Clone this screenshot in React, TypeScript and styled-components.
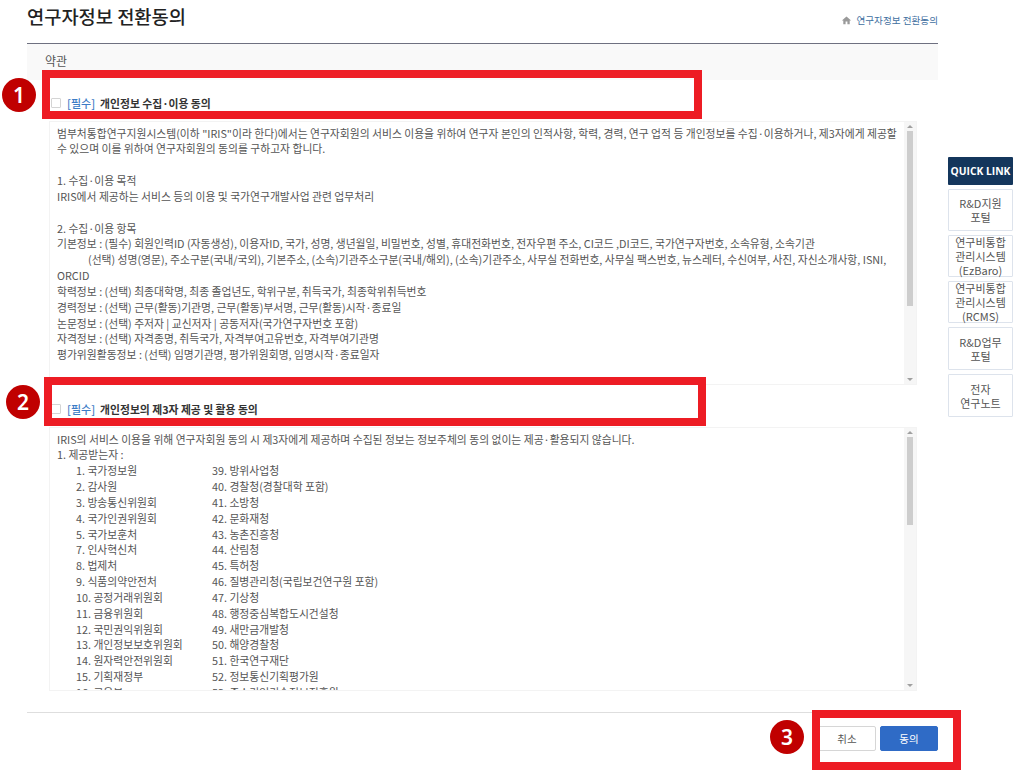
import React from 'react';
import styled, { createGlobalStyle } from 'styled-components';
import { MdHome } from 'react-icons/md';

const GlobalStyle = createGlobalStyle`
  html, body {
    margin: 0;
    padding: 0;
    background: #fff;
    overflow: hidden;
  }
  body {
    font-family: "Noto Sans CJK KR", "Noto Sans", sans-serif;
  }
`;

// Page layout
const Page = styled.div`
  display: flex;
  align-items: flex-start;
  width: 1019px;
  height: 782px;
  padding-left: 27px;
  box-sizing: border-box;
`;

const Main = styled.main`
  width: 911px;
  flex-shrink: 0;
`;

const Header = styled.header`
  display: flex;
  justify-content: space-between;
  align-items: flex-start;
  height: 44px;
  box-sizing: border-box;
  border-bottom: 1px solid #6e7080;
`;

const Title = styled.h1`
  margin: 3px 0 0;
  font-size: 18.7px;
  line-height: 25px;
  font-weight: 500;
  color: #222;
`;

const Breadcrumb = styled.div`
  display: flex;
  align-items: center;
  gap: 4px;
  margin-top: 13px;
  font-size: 9.6px;
  line-height: 14px;
  color: #3f6f9f;

  svg {
    color: #9a9a9a;
    font-size: 11px;
  }
`;

const SectionBar = styled.div`
  height: 36px;
  padding: 7px 0 0 18px;
  box-sizing: border-box;
  background: #f9f9f9;
  font-size: 12px;
  line-height: 20px;
  color: #555;
`;

const AgreeRow = styled.div<{ $height: number }>`
  position: relative;
  display: flex;
  align-items: flex-end;
  gap: 6px;
  height: ${({ $height }) => $height}px;
  padding: 0 0 11px 24px;
  box-sizing: border-box;
  font-size: 10.8px;
  line-height: 14px;
`;

const CheckBox = styled.span`
  width: 8px;
  height: 8px;
  border: 1px solid #d4d4d4;
  border-radius: 1px;
  background: #fff;
  flex-shrink: 0;
  margin-bottom: 2px;
`;

const Required = styled.span`
  color: #3c7cc6;
  font-size: 11px;
  font-weight: 500;
`;

const AgreeTitle = styled.span`
  margin-left: -1px;
  color: #333;
  font-weight: 700;
`;

const TermsBox = styled.div`
  display: flex;
  height: 264px;
  margin-left: 22px;
  width: 868px;
  box-sizing: border-box;
  border: 1px solid #f3f3f3;
  overflow: hidden;
  font-size: 10.8px;
  line-height: 15.85px;
  color: #555;
`;

const TermsBody = styled.div`
  flex: 1;
  min-width: 0;
  padding: 3.5px 4px 0 7px;
  overflow: hidden;
`;

const Line = styled.div`
  min-height: 15.85px;
`;

const LineIndent = styled.span`
  padding-left: 31px;
`;

const OrgGrid = styled.div`
  display: grid;
  grid-template-columns: 136px 1fr;
  padding-left: 19px;
`;

const ScrollTrack = styled.div`
  display: flex;
  flex-direction: column;
  align-items: center;
  width: 12px;
  flex-shrink: 0;
  background: #f6f6f6;
`;

const ScrollArrow = styled.span<{ $down?: boolean }>`
  width: 0;
  height: 0;
  margin: 3px 0;
  border-left: 3px solid transparent;
  border-right: 3px solid transparent;
  ${({ $down }) =>
    $down
      ? 'border-top: 3px solid #a0a0a0; margin-top: auto;'
      : 'border-bottom: 3px solid #a0a0a0;'}
`;

const ScrollThumb = styled.span<{ $height: number }>`
  width: 6px;
  height: ${({ $height }) => $height}px;
  background: #cdcdcd;
`;

const Footer = styled.footer`
  position: relative;
  display: flex;
  justify-content: flex-end;
  gap: 4px;
  margin-top: 21px;
  padding-top: 13px;
  border-top: 1px solid #dedede;
`;

const Button = styled.button<{ $primary?: boolean }>`
  width: 58px;
  height: 25px;
  padding: 0;
  border-radius: 2px;
  border: 1px solid ${({ $primary }) => ($primary ? '#2f6bc6' : '#d6d6d6')};
  background: ${({ $primary }) => ($primary ? '#2f6bc6' : '#fff')};
  color: ${({ $primary }) => ($primary ? '#fff' : '#555')};
  font-family: inherit;
  font-size: 10.5px;
`;

// Annotations painted over the screenshot
const Highlight = styled.div<{ $left?: number; $right?: number; $top: number; $width: number; $height: number }>`
  position: absolute;
  z-index: 2;
  ${({ $left }) => ($left !== undefined ? `left: ${$left}px;` : '')}
  ${({ $right }) => ($right !== undefined ? `right: ${$right}px;` : '')}
  top: ${({ $top }) => $top}px;
  width: ${({ $width }) => $width}px;
  height: ${({ $height }) => $height}px;
  box-sizing: border-box;
  border: 8px solid #ed1c24;
  pointer-events: none;
`;

const Badge = styled.div<{ $left?: number; $right?: number; $top: number }>`
  position: absolute;
  z-index: 3;
  ${({ $left }) => ($left !== undefined ? `left: ${$left}px;` : '')}
  ${({ $right }) => ($right !== undefined ? `right: ${$right}px;` : '')}
  top: ${({ $top }) => $top}px;
  width: 34px;
  height: 34px;
  border-radius: 50%;
  background: #c00000;
  color: #fff;
  display: flex;
  align-items: center;
  justify-content: center;
  font-size: 21px;
  font-weight: 600;
  font-family: "Noto Sans", sans-serif;
`;

// Quick link rail
const QuickRail = styled.aside`
  display: flex;
  flex-direction: column;
  gap: 4px;
  width: 65px;
  margin: 157px 0 0 10px;
  flex-shrink: 0;
`;

const QuickHead = styled.div`
  height: 28px;
  background: #14365c;
  border-radius: 1px;
  color: #fff;
  font-family: "Open Sans", sans-serif;
  font-size: 10.3px;
  font-weight: 700;
  line-height: 28px;
  text-align: center;
  white-space: nowrap;
`;

const QuickItem = styled.a<{ $height: number }>`
  display: flex;
  align-items: center;
  justify-content: center;
  height: ${({ $height }) => $height}px;
  box-sizing: border-box;
  border: 1px solid #dde3ec;
  border-radius: 1px;
  color: #555;
  font-size: 11px;
  line-height: 14px;
  text-align: center;
`;

const QuickLabel = styled.div`
  display: block;
`;

const orgs: [string, string][] = [
  ['1. 국가정보원', '39. 방위사업청'],
  ['2. 감사원', '40. 경찰청(경찰대학 포함)'],
  ['3. 방송통신위원회', '41. 소방청'],
  ['4. 국가인권위원회', '42. 문화재청'],
  ['5. 국가보훈처', '43. 농촌진흥청'],
  ['7. 인사혁신처', '44. 산림청'],
  ['8. 법제처', '45. 특허청'],
  ['9. 식품의약안전처', '46. 질병관리청(국립보건연구원 포함)'],
  ['10. 공정거래위원회', '47. 기상청'],
  ['11. 금융위원회', '48. 행정중심복합도시건설청'],
  ['12. 국민권익위원회', '49. 새만금개발청'],
  ['13. 개인정보보호위원회', '50. 해양경찰청'],
  ['14. 원자력안전위원회', '51. 한국연구재단'],
  ['15. 기획재정부', '52. 정보통신기획평가원'],
  ['16. 교육부', '53. 중소기업기술정보진흥원'],
];

const quickLinks = [
  { label: ['R&D지원', '포털'], height: 42 },
  { label: ['연구비통합', '관리시스템', '(EzBaro)'], height: 42 },
  { label: ['연구비통합', '관리시스템', '(RCMS)'], height: 42 },
  { label: ['R&D업무', '포털'], height: 43 },
  { label: ['전자', '연구노트'], height: 43 },
];

const ScrollBar = ({ thumb }: { thumb: number }) => (
  <ScrollTrack>
    <ScrollArrow />
    <ScrollThumb $height={thumb} />
    <ScrollArrow $down />
  </ScrollTrack>
);

export default function App() {
  return (
    <>
      <GlobalStyle />
      <Page>
        <Main>
          <Header>
            <Title>연구자정보 전환동의</Title>
            <Breadcrumb>
              <MdHome />
              <span>연구자정보 전환동의</span>
            </Breadcrumb>
          </Header>

          <SectionBar>약관</SectionBar>

          <AgreeRow $height={41}>
            <Highlight $left={15} $top={-10} $width={660} $height={49} />
            <Badge $left={-25} $top={-2}>1</Badge>
            <CheckBox />
            <Required>[필수]</Required>
            <AgreeTitle>개인정보 수집·이용 동의</AgreeTitle>
          </AgreeRow>

          <TermsBox>
            <TermsBody>
              <Line>범부처통합연구지원시스템(이하 "IRIS"이라 한다)에서는 연구자회원의 서비스 이용을 위하여 연구자 본인의 인적사항, 학력, 경력, 연구 업적 등 개인정보를 수집·이용하거나, 제3자에게 제공할 수 있으며 이를 위하여 연구자회원의 동의를 구하고자 합니다.</Line>
              <Line />
              <Line>1. 수집·이용 목적</Line>
              <Line>IRIS에서 제공하는 서비스 등의 이용 및 국가연구개발사업 관련 업무처리</Line>
              <Line />
              <Line>2. 수집·이용 항목</Line>
              <Line>기본정보 : (필수) 회원인력ID (자동생성), 이용자ID, 국가, 성명, 생년월일, 비밀번호, 성별, 휴대전화번호, 전자우편 주소, CI코드 ,DI코드, 국가연구자번호, 소속유형, 소속기관</Line>
              <Line>
                <LineIndent />
                (선택) 성명(영문), 주소구분(국내/국외), 기본주소, (소속)기관주소구분(국내/해외), (소속)기관주소, 사무실 전화번호, 사무실 팩스번호, 뉴스레터, 수신여부, 사진, 자신소개사항, ISNI, ORCID
              </Line>
              <Line>학력정보 : (선택) 최종대학명, 최종 졸업년도, 학위구분, 취득국가, 최종학위취득번호</Line>
              <Line>경력정보 : (선택) 근무(활동)기관명, 근무(활동)부서명, 근무(활동)시작·종료일</Line>
              <Line>논문정보 : (선택) 주저자 | 교신저자 | 공동저자(국가연구자번호 포함)</Line>
              <Line>자격정보 : (선택) 자격종명, 취득국가, 자격부여고유번호, 자격부여기관명</Line>
              <Line>평가위원활동정보 : (선택) 임명기관명, 평가위원회명, 임명시작·종료일자</Line>
            </TermsBody>
            <ScrollBar thumb={175} />
          </TermsBox>

          <AgreeRow $height={42}>
            <Highlight $left={17} $top={-8} $width={662} $height={49} />
            <Badge $left={-21} $top={0}>2</Badge>
            <CheckBox />
            <Required>[필수]</Required>
            <AgreeTitle>개인정보의 제3자 제공 및 활용 동의</AgreeTitle>
          </AgreeRow>

          <TermsBox>
            <TermsBody>
              <Line>IRIS의 서비스 이용을 위해 연구자회원 동의 시 제3자에게 제공하며 수집된 정보는 정보주체의 동의 없이는 제공·활용되지 않습니다.</Line>
              <Line>1. 제공받는자 :</Line>
              <OrgGrid>
                {orgs.map(([left, right]) => (
                  <React.Fragment key={left}>
                    <Line>{left}</Line>
                    <Line>{right}</Line>
                  </React.Fragment>
                ))}
              </OrgGrid>
            </TermsBody>
            <ScrollBar thumb={88} />
          </TermsBox>

          <Footer>
            <Highlight $right={-23} $top={-3} $width={149} $height={60} />
            <Badge $right={134} $top={7}>3</Badge>
            <Button>취소</Button>
            <Button $primary>동의</Button>
          </Footer>
        </Main>

        <QuickRail>
          <QuickHead>QUICK LINK</QuickHead>
          {quickLinks.map(item => (
            <QuickItem key={item.label.join('')} $height={item.height}>
              <div>
                {item.label.map(part => (
                  <QuickLabel key={part}>{part}</QuickLabel>
                ))}
              </div>
            </QuickItem>
          ))}
        </QuickRail>
      </Page>
    </>
  );
}
